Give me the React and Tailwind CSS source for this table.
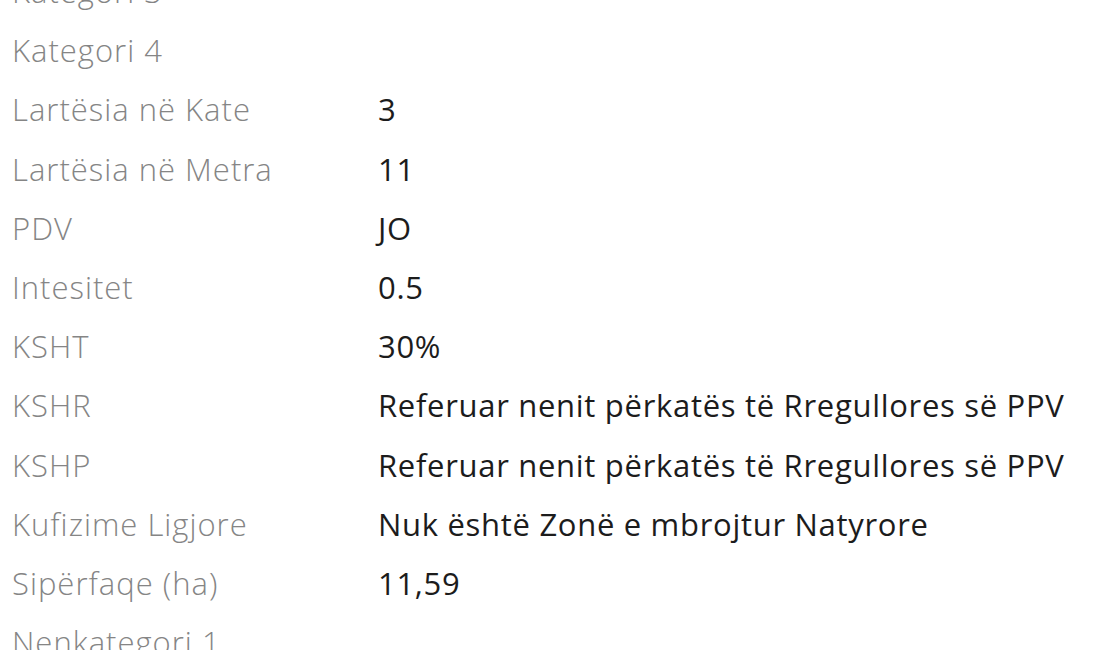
const rows = [
  ["Kategori 3", ""],
  ["Kategori 4", ""],
  ["Lartësia në Kate", "3"],
  ["Lartësia në Metra", "11"],
  ["PDV", "JO"],
  ["Intesitet", "0.5"],
  ["KSHT", "30%"],
  ["KSHR", "Referuar nenit përkatës të Rregullores së PPV"],
  ["KSHP", "Referuar nenit përkatës të Rregullores së PPV"],
  ["Kufizime Ligjore", "Nuk është Zonë e mbrojtur Natyrore"],
  ["Sipërfaqe (ha)", "11,59"],
  ["Nenkategori 1", ""],
];

export default function App() {
  return (
    <div className="w-[1100px] h-[650px] overflow-hidden bg-white font-['Open_Sans','Liberation_Sans',sans-serif]">
      <div className="-mt-[38px] pl-3">
        {rows.map(([label, value], i) => (
          <div key={i} className="grid grid-cols-[366px_1fr] h-[59.2px] items-center text-[31px] leading-none">
            <span className="text-[#858585] font-light tracking-[1px]">{label}</span>
            <span className="text-[#1c1c1c] tracking-[0.7px]">{value}</span>
          </div>
        ))}
      </div>
    </div>
  );
}
